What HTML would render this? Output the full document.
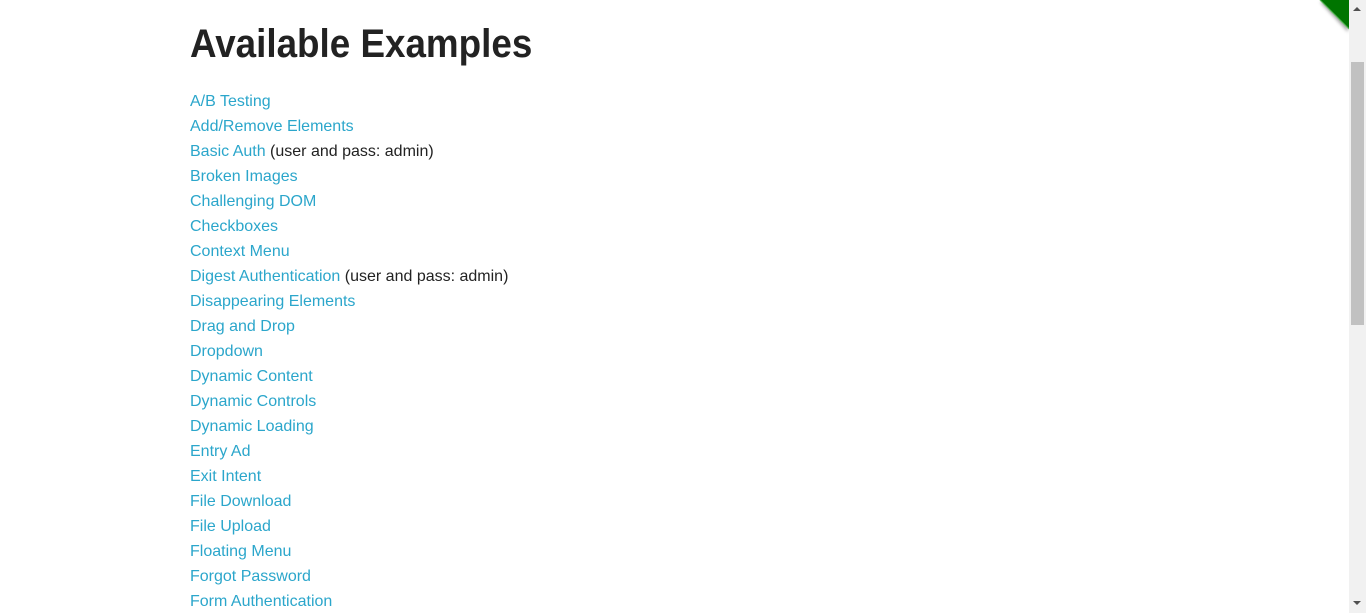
<!DOCTYPE html>
<html><head><meta charset="utf-8"><style>
html,body{margin:0;padding:0;background:#fff;overflow:hidden;width:1366px;height:613px;font-family:"Liberation Sans",Arial,sans-serif;}
.wrap{position:absolute;left:190px;top:0;}
h1{margin:0;position:absolute;top:21px;left:0;font-size:40px;font-weight:bold;color:#222;white-space:nowrap;line-height:46px;transform:scaleX(0.92);transform-origin:0 0;font-family:"Liberation Sans",sans-serif;}
ul{list-style:none;margin:0;padding:0;position:absolute;top:89px;left:0;}
li{height:25px;line-height:25px;font-size:16px;color:#222;white-space:nowrap;}
a{color:#2ba6cb;text-decoration:none;}
.sb{position:absolute;left:1349px;top:0;width:17px;height:613px;background:#f1f1f1;}
.th{position:absolute;left:2px;top:62px;width:13px;height:263px;background:#c1c1c1;}
.up{position:absolute;left:4px;top:7px;width:0;height:0;border-left:4px solid transparent;border-right:4px solid transparent;border-bottom:4px solid #505050;}
.dn{position:absolute;left:4px;top:601px;width:0;height:0;border-left:4px solid transparent;border-right:4px solid transparent;border-top:4px solid #505050;}
svg.rib{position:absolute;left:1310px;top:0;}
</style></head><body>
<svg class="rib" width="39" height="40" viewBox="0 0 39 40">
<defs><filter id="s" x="-50%" y="-50%" width="200%" height="200%"><feGaussianBlur stdDeviation="1.5"/></filter></defs>
<polygon points="11,0 39,0 39,30" fill="rgba(0,0,0,0.35)" filter="url(#s)" transform="translate(-1,2)"/>
<polygon points="10,0 39,0 39,29" fill="#007500"/>
<line x1="10" y1="0" x2="39" y2="29" stroke="#5cb85c" stroke-width="1.2"/>
</svg>
<div class="wrap">
<h1>Available Examples</h1>
<ul>
<li><a>A/B Testing</a></li>
<li><a>Add/Remove Elements</a></li>
<li><a>Basic Auth</a> (user and pass: admin)</li>
<li><a>Broken Images</a></li>
<li><a>Challenging DOM</a></li>
<li><a>Checkboxes</a></li>
<li><a>Context Menu</a></li>
<li><a>Digest Authentication</a> (user and pass: admin)</li>
<li><a>Disappearing Elements</a></li>
<li><a>Drag and Drop</a></li>
<li><a>Dropdown</a></li>
<li><a>Dynamic Content</a></li>
<li><a>Dynamic Controls</a></li>
<li><a>Dynamic Loading</a></li>
<li><a>Entry Ad</a></li>
<li><a>Exit Intent</a></li>
<li><a>File Download</a></li>
<li><a>File Upload</a></li>
<li><a>Floating Menu</a></li>
<li><a>Forgot Password</a></li>
<li><a>Form Authentication</a></li>
</ul>
</div>
<div class="sb"><div class="up"></div><div class="th"></div><div class="dn"></div></div>
</body></html>
